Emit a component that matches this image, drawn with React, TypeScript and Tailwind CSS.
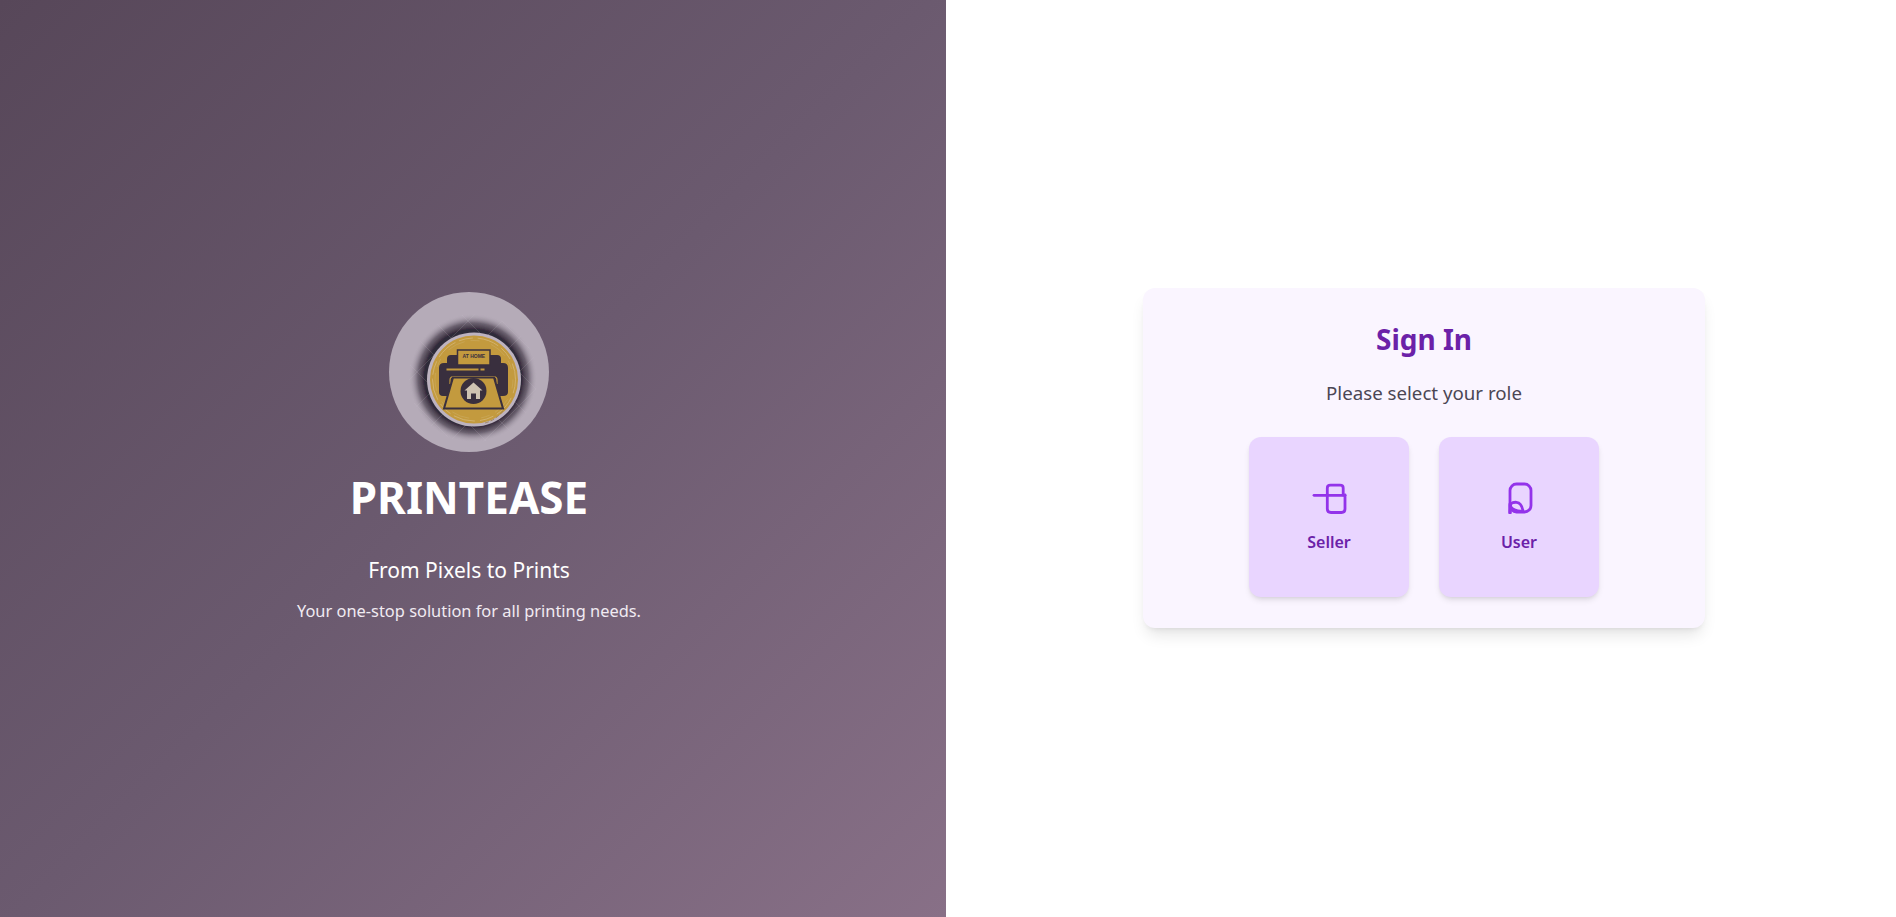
const font = "font-['Noto_Sans','Open_Sans',sans-serif]";

function Logo() {
  const hatch = [];
  for (let i = -120; i <= 280; i += 34) {
    hatch.push(<line key={'a' + i} x1={i} y1={0} x2={i + 160} y2={160} stroke="#c9c2cc" strokeWidth="0.5" opacity="0.35" />);
    hatch.push(<line key={'b' + i} x1={i + 160} y1={0} x2={i} y2={160} stroke="#c9c2cc" strokeWidth="0.5" opacity="0.35" />);
  }
  return (
    <svg width="160" height="160" viewBox="0 0 160 160" className="block">
      <defs>
        <radialGradient id="glow" cx="0.5" cy="0.5" r="0.5">
          <stop offset="0.76" stopColor="#352c3a" stopOpacity="1" />
          <stop offset="0.86" stopColor="#453b4a" stopOpacity="0.65" />
          <stop offset="1" stopColor="#b5abb8" stopOpacity="0" />
        </radialGradient>
        <clipPath id="outer"><circle cx="80" cy="80" r="80" /></clipPath>
        <clipPath id="ring"><circle cx="84" cy="86" r="64" /></clipPath>
      </defs>
      <circle cx="80" cy="80" r="80" fill="#b5abb8" />
      <g clipPath="url(#outer)">
        <circle cx="84" cy="86" r="64" fill="url(#glow)" />
        <g clipPath="url(#ring)">{hatch}</g>
      </g>
      <circle cx="85" cy="87.5" r="47" fill="#bdb3c0" />
      <circle cx="85" cy="87.5" r="44" fill="#c39a3e" />
      <circle cx="85" cy="87.5" r="41.5" fill="none" stroke="#d4b878" strokeWidth="0.8" strokeDasharray="14 5 22 4" />
      <circle cx="85" cy="87.5" r="39" fill="none" stroke="#cdae68" strokeWidth="0.5" strokeDasharray="9 12 18 6" />
      <path d="M96 131 Q108 128 116 116" fill="none" stroke="#9a8258" strokeWidth="0.8" strokeDasharray="4 2" />
      <path d="M58 71 V67 Q58 63 62 63 H108 Q112 63 112 67 V71 H114 Q119 71 119 76 V100 Q119 104 114 104 H54 Q50 104 50 100 V76 Q50 71 55 71 Z" fill="#392f3e" />
      <rect x="68.5" y="58" width="32.5" height="15" fill="#c39a3e" stroke="#392f3e" strokeWidth="1.5" />
      <text x="84.8" y="65.5" textAnchor="middle" fontSize="5" fontWeight="700" fill="#392f3e" fontFamily="Liberation Sans, sans-serif">AT HOME</text>
      <rect x="57.5" y="76.5" width="32" height="2" fill="#c39a3e" />
      <rect x="91.5" y="76.5" width="4" height="2" fill="#c39a3e" />
      <path d="M61 92 V88 Q61 84.5 65 84.5 H104 Q108 84.5 108 88 V92" fill="none" stroke="#c39a3e" strokeWidth="1.2" />
      <path d="M64 85.5 H105 L114 116.5 H55 Z" fill="#c39a3e" stroke="#392f3e" strokeWidth="2" />
      <circle cx="84.5" cy="99" r="13" fill="#392f3e" />
      <path d="M84.5 90.5 L93.5 98.5 H91 V107 H87 V101.5 H82 V107 H78 V98.5 H75.5 Z" fill="#cfc3b2" />
    </svg>
  );
}

function SellerIcon() {
  return (
    <svg width="36" height="32" viewBox="0 0 36 32" fill="none" stroke="#9333ea" strokeWidth="2.8" strokeLinecap="round" strokeLinejoin="round" className="block">
      <path d="M3 13.3 H34" />
      <path d="M16.3 13 V6 Q16.3 3.2 19.5 3.2 H29 Q32.2 3.2 32.2 6 V13" />
      <path d="M16.3 13 V27 Q16.3 30.5 20 30.5 H30.5 Q34 30.5 34 27 V13" />
    </svg>
  );
}

function UserIcon() {
  return (
    <svg width="36" height="32" viewBox="0 0 36 32" fill="none" stroke="#9333ea" strokeWidth="2.8" strokeLinecap="round" strokeLinejoin="round" className="block">
      <rect x="9" y="2" width="21" height="28" rx="6.5" />
      <path d="M9.3 22 Q9 26 9 30.5" strokeWidth="3.6" />
      <path d="M9.5 22 Q12 20 15.5 20.3 Q21 21 22 29.5" />
      <path d="M10 25 Q13 29 22 29.5" />
    </svg>
  );
}

function RoleTile({ label, icon }: { label: string; icon: React.ReactNode }) {
  return (
    <button className="w-40 h-40 rounded-xl bg-[#e9d5ff] shadow-md flex flex-col items-center pt-[45px]">
      {icon}
      <span className="mt-[16px] text-[16px] leading-6 font-semibold text-[#6b21a8]">{label}</span>
    </button>
  );
}

export default function App() {
  return (
    <div className={`flex min-h-[917px] h-screen bg-white ${font}`}>
      <div className="w-[946px] pr-[8px] flex flex-col items-center justify-center text-white bg-[linear-gradient(135deg,#574759_0%,#6b5a6f_50%,#887087_100%)]">
        <Logo />
        <h1 className="mt-[12px] text-[44px] leading-[66px] font-bold">PRINTEASE</h1>
        <p className="mt-[26px] text-[21px] leading-7">From Pixels to Prints</p>
        <p className="mt-[13px] text-[16.4px] leading-7 text-[#f1ebf2]">Your one-stop solution for all printing needs.</p>
      </div>
      <div className="flex-1 pl-[6px] flex items-center justify-center">
        <div className="w-[562px] h-[340px] -mt-[1px] rounded-xl bg-[#faf5ff] shadow-lg flex flex-col items-center pt-[30px]">
          <h2 className="text-[28px] leading-[42px] font-bold text-[#6b21a8]">Sign In</h2>
          <p className="mt-[19px] text-[18.7px] leading-7 text-[#4b4654]">Please select your role</p>
          <div className="mt-[30px] flex gap-[30px]">
            <RoleTile label="Seller" icon={<SellerIcon />} />
            <RoleTile label="User" icon={<UserIcon />} />
          </div>
        </div>
      </div>
    </div>
  );
}
